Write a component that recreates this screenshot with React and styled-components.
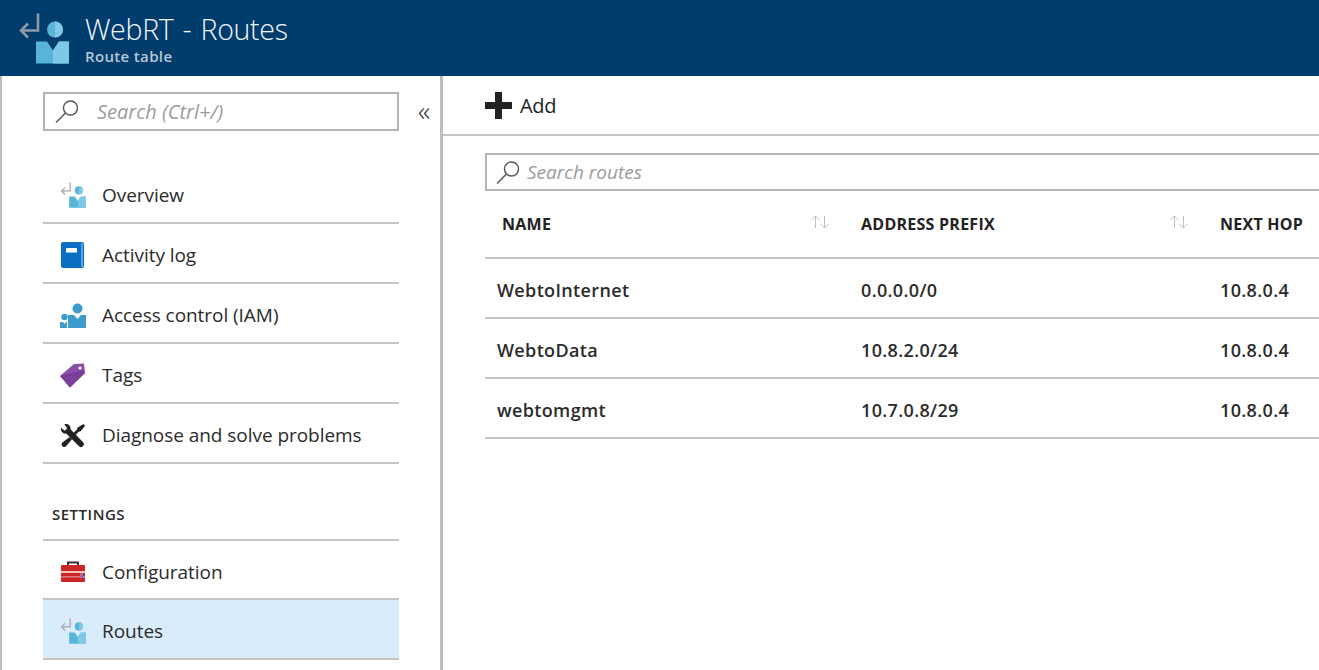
import React from 'react'
import styled, { createGlobalStyle } from 'styled-components'

const GlobalStyle = createGlobalStyle`
  html, body {
    margin: 0;
    padding: 0;
    height: 100%;
    overflow: hidden;
    background: white;
    font-family: 'Open Sans', 'Noto Sans', sans-serif;
    color: #222;
  }
`

const Page = styled.div`
  width: 1319px;
  height: 670px;
  display: flex;
  flex-direction: column;
  overflow: hidden;
`

const Header = styled.header`
  height: 76px;
  flex: none;
  background: #003c6c;
  display: flex;
  align-items: center;
  padding-left: 18px;
  gap: 16px;
`

const HeaderText = styled.div`
  display: flex;
  flex-direction: column;
`

const Title = styled.div`
  color: #f2f6fa;
  font-size: 28.5px;
  font-weight: 300;
  line-height: 36px;
  letter-spacing: -0.3px;
  word-spacing: 2px;
`

const Subtitle = styled.div`
  color: #b9c7d6;
  font-size: 15px;
  font-weight: 600;
  line-height: 18px;
  letter-spacing: 0.35px;
`

const Body = styled.div`
  flex: 1;
  display: flex;
  min-height: 0;
  border-left: 2px solid #bdbdbd;
`

const Sidebar = styled.aside`
  width: 441px;
  flex: none;
  box-sizing: border-box;
  border-right: 3px solid #bdbdbd;
  padding: 16px 0 0 41px;
`

const SearchRow = styled.div`
  display: flex;
  align-items: center;
`

const SearchBox = styled.div`
  box-sizing: border-box;
  display: flex;
  align-items: center;
  border: 2px solid #b4b4b4;
  color: #9b9b9b;
  font-style: italic;
  height: ${props => props.tall}px;
  width: ${props => props.wide};
  padding-left: ${props => props.pad}px;
  gap: ${props => props.gap}px;
  font-size: ${props => props.size}px;
  flex: none;
`

const Collapse = styled.div`
  margin-left: 19px;
  font-size: 28px;
  font-weight: 300;
  line-height: 28px;
  color: #333;
  padding-bottom: 4px;
`

const NavList = styled.nav`
  width: 356px;
  margin-top: ${props => props.top}px;
`

const NavItem = styled.div`
  box-sizing: border-box;
  height: ${props => (props.first ? 61 : 60)}px;
  display: flex;
  align-items: center;
  padding-top: 4px;
  border-bottom: 2px solid #c4c4c4;
  border-top: ${props => (props.first ? '2px solid #c4c4c4' : 'none')};
  background: ${props => (props.active ? '#d9ecfb' : 'transparent')};
  font-size: 19px;
  letter-spacing: -0.05px;
  color: #2b2b2b;
`

const NavIcon = styled.div`
  width: 59px;
  flex: none;
  display: flex;
  justify-content: center;
`

const SectionLabel = styled.div`
  margin-top: 40px;
  padding-left: 9px;
  height: 35px;
  font-size: 15px;
  font-weight: 600;
  line-height: 20px;
  letter-spacing: 0.5px;
  color: #2b2b2b;
`

const Main = styled.main`
  flex: 1;
  min-width: 0;
`

const Toolbar = styled.div`
  box-sizing: border-box;
  height: 60px;
  display: flex;
  align-items: center;
  gap: 8px;
  padding-left: 42px;
  border-bottom: 2px solid #c4c4c4;
  font-size: 20px;
  letter-spacing: -0.3px;
  color: #222;
`

const Content = styled.div`
  padding: 17px 0 0 42px;
`

const Row = styled.div`
  display: grid;
  grid-template-columns: 359px 359px 1fr;
  box-sizing: border-box;
  height: 60px;
  padding-top: 4px;
  align-items: center;
  border-bottom: 2px solid #c4c4c4;
`

const HeadRow = styled(Row)`
  height: 68px;
  padding-top: 0;
`

const HeadCell = styled.div`
  display: flex;
  justify-content: space-between;
  align-items: center;
  padding: 0 14px 0 17px;
  font-size: 16px;
  font-weight: 700;
  letter-spacing: 0.25px;
  color: #222;
  white-space: nowrap;
`

const Sort = styled.svg`
  margin-top: -5px;
`

const Cell = styled.div`
  padding-left: ${props => (props.name ? 12 : 17)}px;
  font-size: 18px;
  font-weight: 600;
  letter-spacing: 0.35px;
  color: #2b2b2b;
`

const Magnifier = ({ size = 27 }) => (
  <svg width={size} height={size} viewBox='0 0 27 27' fill='none' stroke='#555' strokeWidth='1.4'>
    <circle cx='16.5' cy='10' r='7' />
    <path d='M11.5 15 2 24.5' />
  </svg>
)

const RouteIcon = ({ size = 26, arrow = '#a6a6a6', line = 2.4 }) => (
  <svg width={size} height={size} viewBox='0 0 51 50' fill='none'>
    <path d='M20 0v17H3M10 10l-7 7 7 7' stroke={arrow} strokeWidth={line} />
    <circle cx='37' cy='16' r='8' fill='#59b4d9' />
    <path d='M37 8a8 8 0 0 1 0 16z' fill='#7fc9e6' />
    <path d='M18 28h11l6 9 6-9h10v22H18z' fill='#59b4d9' />
    <path d='M35 37l6-9h10v22H35z' fill='#7fc9e6' />
  </svg>
)

const BookIcon = () => (
  <svg width='23' height='26' viewBox='0 0 23 26'>
    <rect x='0' y='0' width='23' height='26' rx='2' fill='#0a6fc2' />
    <rect x='20' y='1' width='2' height='24' fill='#57a3dc' />
    <rect x='5' y='6' width='11' height='4.500' rx='.5' fill='#fff' />
  </svg>
)

const IamIcon = () => (
  <svg width='26' height='25' viewBox='0 0 26 25'>
    <circle cx='17.500' cy='5.500' r='5' fill='#3d9ccb' />
    <path d='M8 12h6l3.500 4 3.500-4h5v13H8z' fill='#3d9ccb' />
    <circle cx='4.500' cy='14' r='3.200' fill='#3d9ccb' />
    <path d='M0 19h3l1.500 2 1.500-2h1v6H0z' fill='#3d9ccb' />
  </svg>
)

const TagIcon = () => (
  <svg width='27' height='26' viewBox='0 0 27 26'>
    <path d='M15 2 25 1.500 26 11 11 25.500 1 14z' fill='#8a50a8' />
    <path d='M1 14l10 11.500L26 11l-2-3z' fill='#7a3f99' />
    <circle cx='21' cy='6' r='1.600' fill='#fff' />
  </svg>
)

const ToolsIcon = () => (
  <svg width='25' height='25' viewBox='0 0 26 26' fill='#222'>
    <path d='M1 5l4 3 2.500-2.500L4.500 1.500C8 0 11.500 2.500 11 6.500L24 20a3 3 0 0 1-4.500 4L6.500 11C3 11.500.5 8.500 1 5z' />
    <path d='M24.500 1 26 3l-4.500 5.500-2 .5L16 12.500 14 10.500 17.500 7 18 5z' />
    <path d='M10 14.500l2.500 2.500-6 7a2.700 2.700 0 0 1-4-3.800z' />
  </svg>
)

const ToolboxIcon = () => (
  <svg width='24' height='21' viewBox='0 0 24 21'>
    <path d='M7 5V1.500h10V5' fill='none' stroke='#333' strokeWidth='2' />
    <rect x='0' y='4' width='24' height='17' rx='1' fill='#c9262a' />
    <rect x='0' y='10' width='24' height='2' fill='#f0c8b4' />
    <rect x='0' y='15' width='24' height='1.500' fill='#e5777a' />
    <rect x='19' y='12' width='3' height='5' fill='#8f6fb5' />
  </svg>
)

const PlusIcon = () => (
  <svg width='27' height='27' viewBox='0 0 27 27' fill='#222'>
    <path d='M10 0h7v10h10v7H17v10h-7V17H0v-7h10z' />
  </svg>
)

const SortIcon = () => (
  <Sort width='20' height='14' viewBox='0 0 20 14' fill='none' stroke='#bdbdbd' strokeWidth='1'>
    <path d='M5.500 13V1M1.500 5l4-4 4 4M14.500 1v12M10.500 9l4 4 4-4' />
  </Sort>
)

const topNav = [
  { label: 'Overview', icon: <RouteIcon /> },
  { label: 'Activity log', icon: <BookIcon /> },
  { label: 'Access control (IAM)', icon: <IamIcon /> },
  { label: 'Tags', icon: <TagIcon /> },
  { label: 'Diagnose and solve problems', icon: <ToolsIcon /> }
]

const routes = [
  { name: 'WebtoInternet', prefix: '0.0.0.0/0', hop: '10.8.0.4' },
  { name: 'WebtoData', prefix: '10.8.2.0/24', hop: '10.8.0.4' },
  { name: 'webtomgmt', prefix: '10.7.0.8/29', hop: '10.8.0.4' }
]

export default function App () {
  return (
    <Page>
      <GlobalStyle />
      <Header>
        <RouteIcon size={51} arrow='#8e9aa6' line={2.6} />
        <HeaderText>
          <Title>WebRT - Routes</Title>
          <Subtitle>Route table</Subtitle>
        </HeaderText>
      </Header>
      <Body>
        <Sidebar>
          <SearchRow>
            <SearchBox tall={39} wide='356px' pad={9} gap={16} size={20}>
              <Magnifier />
              Search (Ctrl+/)
            </SearchBox>
            <Collapse>«</Collapse>
          </SearchRow>
          <NavList top={33}>
            {topNav.map(item => (
              <NavItem key={item.label}>
                <NavIcon>{item.icon}</NavIcon>
                {item.label}
              </NavItem>
            ))}
          </NavList>
          <SectionLabel>SETTINGS</SectionLabel>
          <NavList top={0}>
            <NavItem first>
              <NavIcon><ToolboxIcon /></NavIcon>
              Configuration
            </NavItem>
            <NavItem active>
              <NavIcon><RouteIcon /></NavIcon>
              Routes
            </NavItem>
          </NavList>
        </Sidebar>
        <Main>
          <Toolbar>
            <PlusIcon />
            Add
          </Toolbar>
          <Content>
            {/* the box runs past the window's right edge */}
            <SearchBox tall={38} wide='calc(100% + 20px)' pad={8} gap={5} size={19}>
              <Magnifier />
              Search routes
            </SearchBox>
            <HeadRow>
              <HeadCell>NAME<SortIcon /></HeadCell>
              <HeadCell>ADDRESS PREFIX<SortIcon /></HeadCell>
              <HeadCell>NEXT HOP</HeadCell>
            </HeadRow>
            {routes.map(route => (
              <Row key={route.name}>
                <Cell name='true'>{route.name}</Cell>
                <Cell>{route.prefix}</Cell>
                <Cell>{route.hop}</Cell>
              </Row>
            ))}
          </Content>
        </Main>
      </Body>
    </Page>
  )
}
